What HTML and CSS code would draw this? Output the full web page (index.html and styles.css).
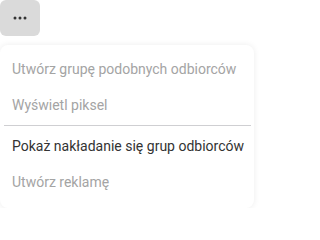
FILE: index.html
```html
<!DOCTYPE html>
<html>
<head>
<meta charset="utf-8">
<link rel="stylesheet" href="styles.css">
</head>
<body>
<div class="wrap">
  <button class="more" aria-label="Więcej">
    <svg width="14" height="4" viewBox="0 0 14 4"><circle cx="2" cy="2" r="1.5"/><circle cx="7" cy="2" r="1.5"/><circle cx="12" cy="2" r="1.5"/></svg>
  </button>
  <div class="menu">
    <div class="item disabled">Utwórz grupę podobnych odbiorców</div>
    <div class="item disabled">Wyświetl piksel</div>
    <div class="sep"></div>
    <div class="item">Pokaż nakładanie się grup odbiorców</div>
    <div class="item disabled">Utwórz reklamę</div>
  </div>
</div>
</body>
</html>
```
FILE: styles.css
```css
html, body { margin: 0; padding: 0; background: #ffffff; }
body { font-family: Roboto, "Liberation Sans", sans-serif; overflow: hidden; }
.wrap { display: flex; flex-direction: column; width: 256px; }
.more {
  width: 40px; height: 36px; border: 0; border-radius: 6px;
  background: #dadada; display: flex; align-items: center; justify-content: center;
  padding: 0; margin: 0;
}
.more svg { fill: #333; }
.menu {
  margin-top: 9px; width: 254px; background: #fff; border-radius: 8px;
  box-shadow: 0 0 6px rgba(0,0,0,0.08); padding: 6px 0 8px;
}
.item {
  height: 36px; display: flex; align-items: center; padding: 0 12px;
  font-size: 14px; color: #333333; white-space: nowrap;
}
.item.disabled { color: #a4a4a4; }
.sep { height: 1px; background: #cfcfd2; margin: 2px 3px 2px 4px; }
```
